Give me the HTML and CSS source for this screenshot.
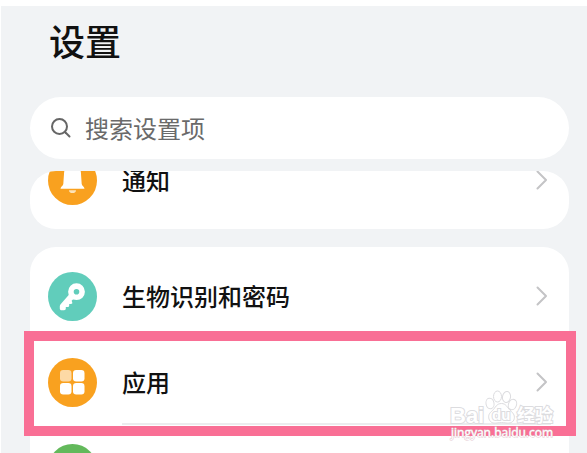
FILE: index.html
```html
<!DOCTYPE html>
<html lang="zh-CN">
<head>
<meta charset="utf-8">
<meta name="viewport" content="width=device-width, initial-scale=1">
<title>设置</title>
<link rel="stylesheet" href="styles.css">
</head>
<body>
<main class="screen">
  <h1 class="title">设置</h1>
  <label class="search">
    <svg class="search-icon" viewBox="0 0 22 22" aria-hidden="true"><circle cx="9.5" cy="9.5" r="7.5"/><path d="M15.500 15.500l4 4"/></svg>
    <input class="search-input" type="search" placeholder="搜索设置项" aria-label="搜索设置项">
  </label>

  <nav class="card card-scrolled">
    <a class="row" href="#notifications">
      <svg class="icon" viewBox="0 0 49 49" aria-hidden="true">
        <circle cx="24.500" cy="24.500" r="24.500" fill="#f9a11f"/>
        <path d="M24.500 8c-5 0-8 4-8.400 8.500L15.300 28c-.1 1.700-2.800 2.800-2.800 4.700h24c0-1.900-2.700-3-2.800-4.700L32.900 16.500C32.500 12 29.500 8 24.500 8z" fill="#fff"/>
        <path d="M21 34.300h7a3.500 2.800 0 0 1-7 0z" fill="#fde3b8"/>
      </svg>
      <span class="label">通知</span>
      <svg class="chevron" viewBox="0 0 12 20" aria-hidden="true"><path d="M1.500 1.500L10 10l-8.500 8.500"/></svg>
    </a>
  </nav>

  <nav class="card">
    <a class="row" href="#security">
      <svg class="icon" viewBox="0 0 49 49" aria-hidden="true">
        <circle cx="24.500" cy="24.500" r="24.500" fill="#61cdbb"/>
        <circle cx="28.500" cy="19.700" r="5.600" fill="none" stroke="#fff" stroke-width="5.600"/>
        <path d="M22 21.500L12.600 32.300c-.5.600-.8 1.200-.8 2v2.200c0 1.200.7 1.800 1.800 1.800h2.500c1 0 1.700-.6 1.700-1.700v-1.700h1.900c1 0 1.500-.6 1.500-1.500v-1.500h1.500c1.700 0 1.900-.8 1.400-2l-.5-1.200 3.700-3.500z" fill="#fff"/>
      </svg>
      <span class="label">生物识别和密码</span>
      <svg class="chevron" viewBox="0 0 12 20" aria-hidden="true"><path d="M1.500 1.500L10 10l-8.500 8.500"/></svg>
    </a>
    <a class="row row-marked" href="#apps">
      <svg class="icon" viewBox="0 0 49 49" aria-hidden="true">
        <circle cx="24.500" cy="24.500" r="24.500" fill="#f9a11f"/>
        <g fill="#fff">
          <rect x="12" y="12" width="11.500" height="11.500" rx="3.200" fill="#fdd9a5"/>
          <rect x="25" y="12" width="11.500" height="11.500" rx="3.200"/>
          <rect x="12" y="25" width="11.500" height="11.500" rx="3.200"/>
          <rect x="25" y="25" width="11.500" height="11.500" rx="3.200"/>
        </g>
      </svg>
      <span class="label">应用</span>
      <svg class="chevron" viewBox="0 0 12 20" aria-hidden="true"><path d="M1.500 1.500L10 10l-8.500 8.500"/></svg>
    </a>
    <div class="row">
      <svg class="icon" viewBox="0 0 49 49" aria-hidden="true"><circle cx="24.500" cy="24.500" r="24.500" fill="#63b95b"/></svg>
    </div>
  </nav>

  <svg class="watermark" viewBox="0 0 108 54" aria-hidden="true">
    <g fill="#fff" stroke="#dcdcdf">
      <ellipse cx="41" cy="14.500" rx="4" ry="5.300" transform="rotate(-12 41 14.500)"/>
      <ellipse cx="48.500" cy="7.500" rx="4" ry="5.500"/>
      <ellipse cx="57.500" cy="8" rx="4" ry="5.500" transform="rotate(10 57.500 8)"/>
      <ellipse cx="63.500" cy="15.500" rx="4" ry="5.300" transform="rotate(20 63.500 15.500)"/>
      <path d="M52.500 14.500c-5 0-6 4-9 7-3.500 3-4.500 5-3.500 8.500 1.300 4 5 4.500 8 4 3-.5 6-.5 9 0 4 .6 7.500-.5 8.300-4.500.6-3.500-1.300-5.500-4.300-8.300-3-3-4-6.700-8.500-6.700z"/>
    </g>
    <text x="1" y="34" class="mark-name mark-bold">Bai</text>
    <text x="43" y="31" class="mark-name mark-small">du</text>
    <text x="68" y="33" class="mark-name mark-cjk">经验</text>
    <text x="2" y="48" class="mark-url">jingyan.baidu.com</text>
  </svg>
</main>
</body>
</html>
```
FILE: styles.css
```css
* {
  box-sizing: border-box;
}

html {
  background: #fff;
}

body {
  margin: 0;
  height: 100vh;
  overflow: hidden;
  padding: 6px 0 0 1px;
  font-family: "Noto Sans CJK SC", sans-serif;
  color: #111;
}

.screen {
  position: relative;
  height: 100%;
  overflow: hidden;
  padding: 8px 18px 0 29px;
  background: #f1f3f5;
}

.title {
  margin: 0 0 31px;
  padding-left: 19px;
  font-size: 36px;
  line-height: 52px;
  font-weight: 500;
}

.search {
  display: flex;
  align-items: center;
  gap: 13px;
  height: 62px;
  padding: 0 20px;
  border-radius: 31px;
  background: #fff;
}

.search-icon {
  flex: none;
  width: 22px;
  height: 22px;
  fill: none;
  stroke: #666;
  stroke-width: 2;
  stroke-linecap: round;
}

.search-input {
  flex: 1;
  min-width: 0;
  padding: 0;
  border: 0;
  outline: 0;
  background: none;
  font: inherit;
  font-size: 24px;
  line-height: 36px;
}

.search-input::placeholder {
  color: #6a6a6a;
  opacity: 1;
}

.card {
  display: flex;
  flex-direction: column;
  margin-top: 18px;
  padding: 6px 0;
  border-radius: 26px;
  background: #fff;
}

.card-scrolled {
  justify-content: flex-end;
  height: 58px;
  margin-top: 12px;
  overflow: hidden;
}

.row {
  position: relative;
  display: flex;
  flex: none;
  align-items: center;
  gap: 25px;
  height: 86px;
  padding: 0 21px 0 18px;
  color: inherit;
  text-decoration: none;
}

.icon {
  flex: none;
  width: 49px;
  height: 49px;
}

.label {
  flex: 1;
  font-size: 24px;
  line-height: 36px;
  font-weight: 500;
}

.chevron {
  flex: none;
  width: 12px;
  height: 20px;
  fill: none;
  stroke: #c4c4c6;
  stroke-width: 2;
  stroke-linecap: round;
  stroke-linejoin: round;
}

.row-marked::before {
  content: "";
  position: absolute;
  right: 18px;
  bottom: 0;
  left: 92px;
  height: 2px;
  background: #ececee;
}

.row-marked::after {
  content: "";
  position: absolute;
  inset: -8px -7px -11px -6px;
  border: 10px solid #f96f95;
}

.watermark {
  position: absolute;
  right: 30px;
  bottom: 10px;
  width: 108px;
  height: 54px;
  overflow: visible;
  pointer-events: none;
}

.mark-name {
  fill: #fff;
  stroke: #dcdcdf;
  stroke-width: 2px;
  paint-order: stroke;
}

.mark-bold {
  font: bold 22px "Liberation Sans", sans-serif;
}

.mark-small {
  font: bold 15px "Liberation Sans", sans-serif;
}

.mark-cjk {
  font: bold 18px "Noto Sans CJK SC", sans-serif;
}

.mark-url {
  fill: #fff;
  stroke: #e3c8d0;
  stroke-width: 1px;
  paint-order: stroke;
  font: 12px "Open Sans", sans-serif;
}
```
